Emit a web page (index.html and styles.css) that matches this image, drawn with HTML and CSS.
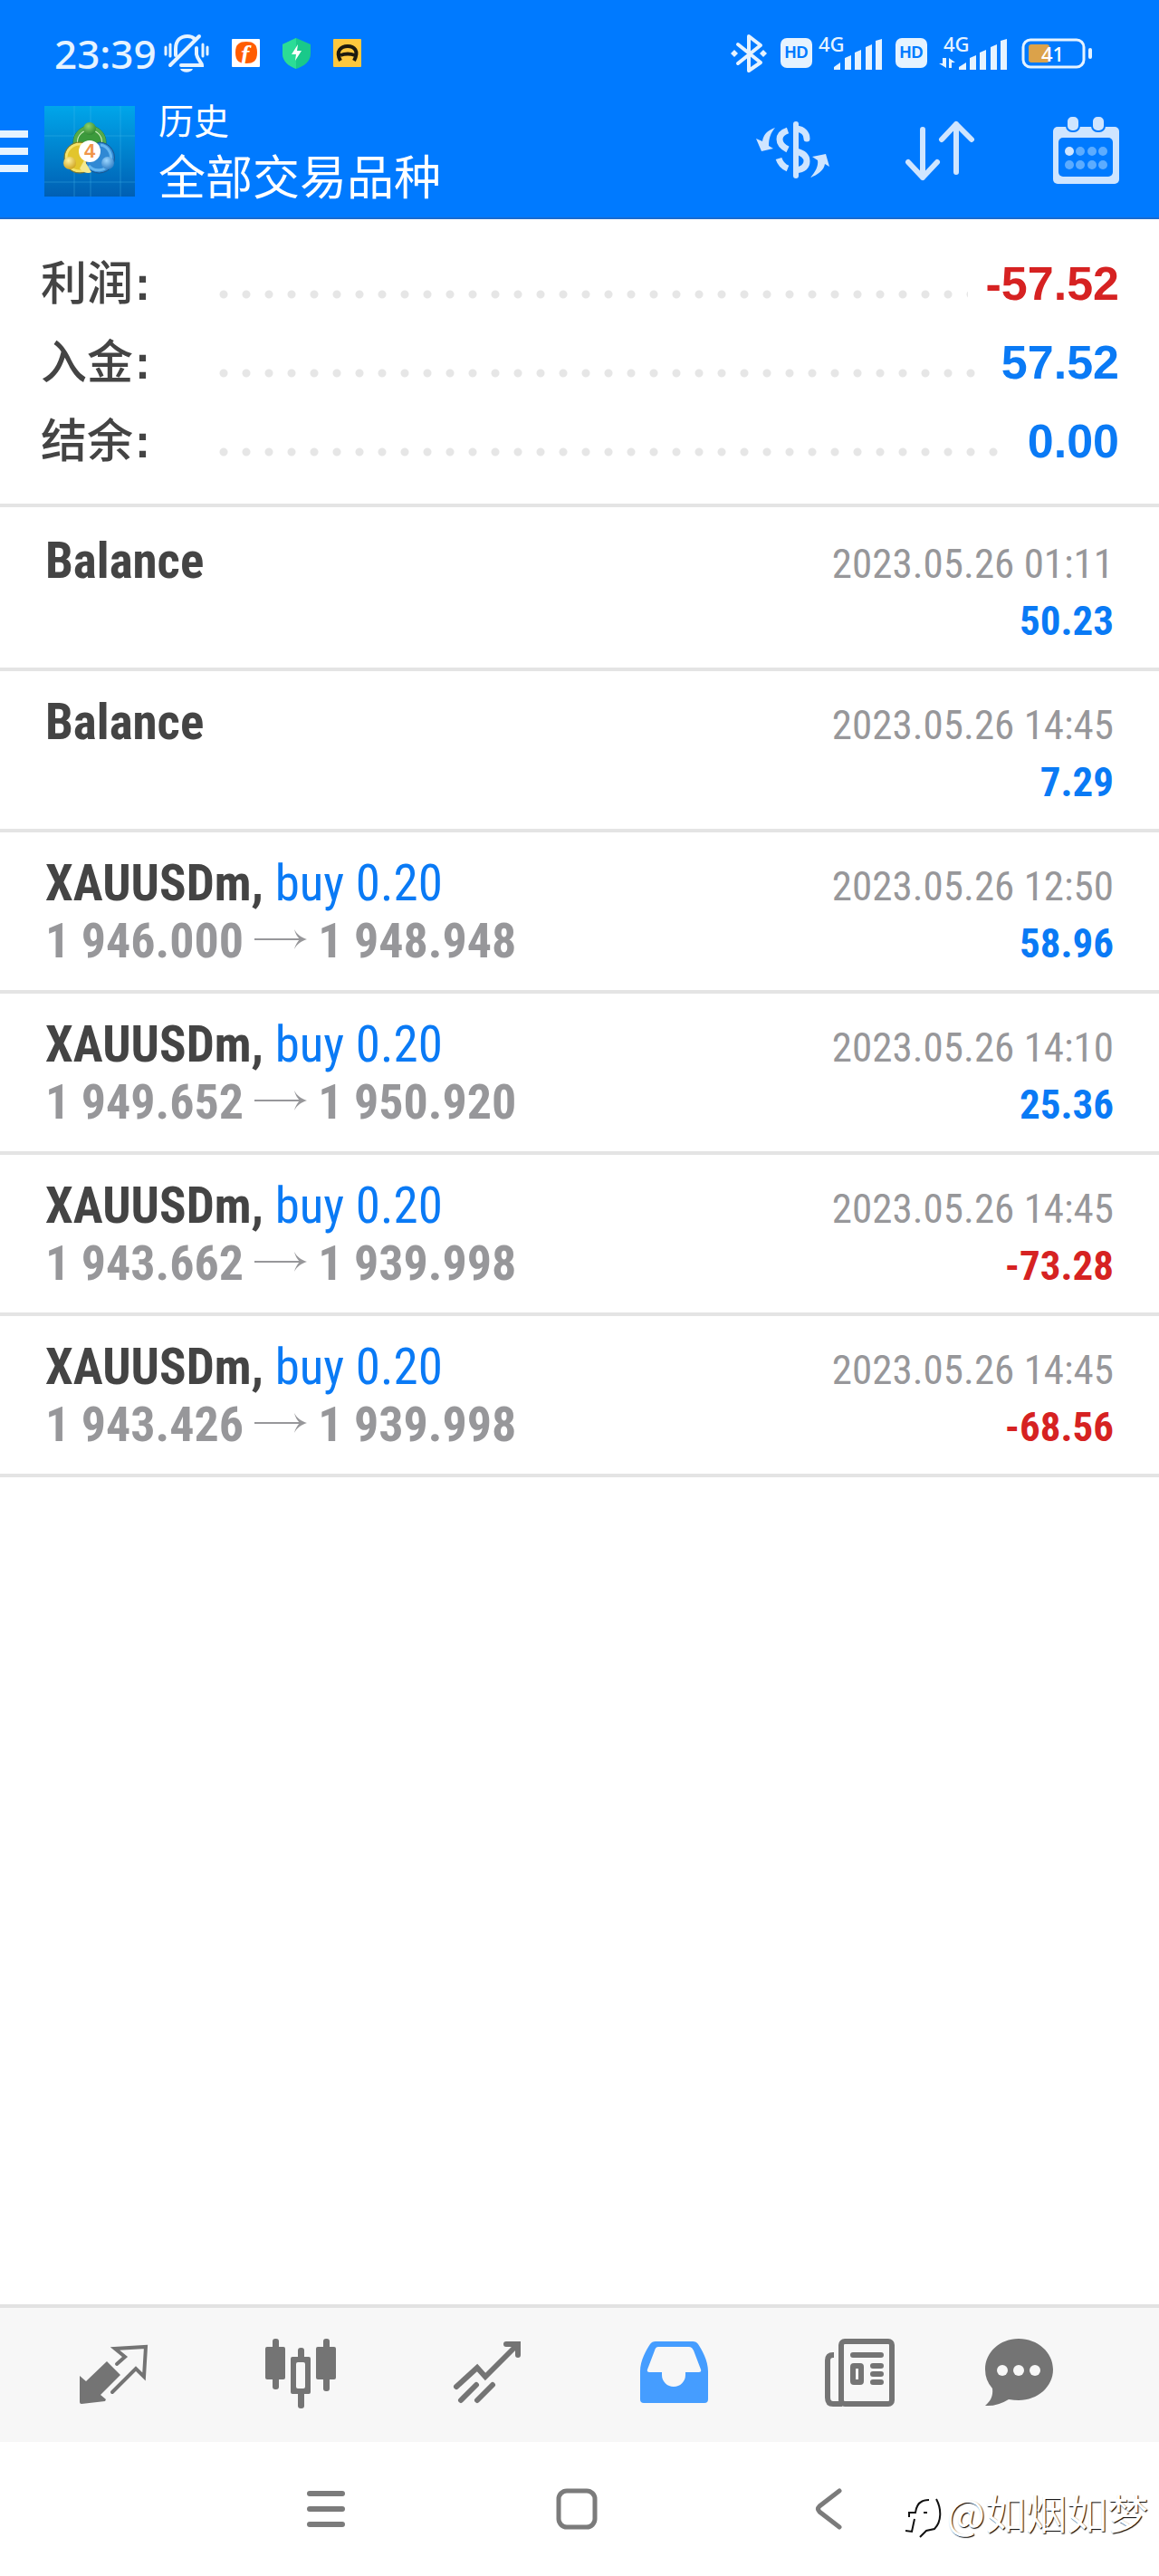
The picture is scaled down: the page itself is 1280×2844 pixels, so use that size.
FILE: index.html
```
<!DOCTYPE html>
<html lang="zh-CN">
<head>
    <meta charset="UTF-8">
    <meta name="viewport" content="width=device-width, initial-scale=1.0">
    <title>历史</title>
    <link rel="stylesheet" href="styles.css">
</head>
<body>
    <header class="header">
        <div class="status-bar">
            <div class="status-left">
                <span class="time">23:39</span>
                <div class="status-icons">
                    <!-- Muted bell -->
                    <svg width="51" height="46" viewBox="1 0 51 46" fill="none" stroke="#e6f3ff" stroke-width="4" stroke-linecap="round">
                        <path d="M15 25V18C15 8 21 4 28 4C31 4 34 5 36 7"/>
                        <path d="M41 4L9 36"/>
                        <path d="M38 17V24C39 30 44 33 44 36H21"/>
                        <path d="M20 40H34C32 45 22 45 20 40Z" fill="#e6f3ff" stroke="none"/>
                        <path d="M4 16V24M9 13V26M45 13V26M50 16V24" stroke-width="3"/>
                    </svg>
                    <svg width="31" height="31" viewBox="0 0 31 31">
                        <rect width="31" height="31" rx="1" fill="#fff"/>
                        <path d="M4 15C4 6 8 3 16 3C24 3 28 6 28 15C28 24 24 27 16 27C8 27 4 24 4 15Z" fill="#ff5c00"/>
                        <text x="10" y="26" class="app-letter">f</text>
                    </svg>
                    <svg width="31" height="34" viewBox="0 0 31 34">
                        <path d="M15 0L31 7V17C31 26 24 31 15 34C7 31 0 26 0 17V7Z" fill="#19c98a"/>
                        <path d="M15 0V34C7 31 0 26 0 17V7Z" fill="#2bdc97"/>
                        <path d="M17 7L10 18H15L14 25L21 14H16Z" fill="#fff"/>
                    </svg>
                    <svg width="31" height="31" viewBox="0 0 31 31">
                        <rect width="31" height="31" rx="1" fill="#ffc83d"/>
                        <path d="M8 24C2 13 9 8 16 8C23 8 29 13 23 24M8 18C13 16 19 16 24 18" fill="none" stroke="#1d1a10" stroke-width="4"/>
                    </svg>
                </div>
            </div>
            <div class="status-right">
                <!-- Bluetooth -->
                <svg width="40" height="44" viewBox="0 0 40 44" fill="none" stroke="#e6f3ff" stroke-width="4" stroke-linecap="round" stroke-linejoin="round">
                    <path d="M8 12L33 32L20 41V3L33 13L8 33"/>
                    <path d="M0 22L4 18L8 22L4 26ZM32 22L36 18L40 22L36 26Z" fill="#e6f3ff" stroke="none"/>
                </svg>
                <div class="sim">
                    <span class="hd">HD</span>
                    <svg width="70" height="52" viewBox="0 -6 70 52" fill="#e6f3ff">
                        <text x="0" y="18" class="net">4G</text>
                        <path d="M17 35L24 30V38H17ZM29 25L36 22V38H29ZM40 19L47 16V38H40ZM52 13L59 10V38H52ZM63 6L70 4V38H63Z"/>
                    </svg>
                </div>
                <div class="sim">
                    <span class="hd">HD</span>
                    <svg width="82" height="52" viewBox="0 -6 82 52" fill="#e6f3ff">
                        <text x="11" y="18" class="net">4G</text>
                        <path d="M14 25V36L6 31H10V25ZM17 36V25L24 30H20V36Z"/>
                        <path d="M28 35L36 30V38H28ZM40 25L47 22V38H40ZM51 19L58 16V38H51ZM63 13L70 10V38H63ZM74 6L81 4V38H74Z"/>
                    </svg>
                </div>
                <svg width="79" height="34" viewBox="0 0 79 34">
                    <rect x="2" y="2" width="67" height="30" rx="8" fill="none" stroke="#e6f3ff" stroke-width="3"/>
                    <rect x="8" y="7" width="23" height="20" rx="3" fill="#dba24a"/>
                    <rect x="74" y="11" width="4" height="12" rx="2" fill="#e6f3ff"/>
                    <text x="22" y="26" class="battery-level">41</text>
                </svg>
            </div>
        </div>

        <div class="app-bar">
            <button class="menu-button" type="button" aria-label="菜单">
                <svg width="31" height="46" viewBox="0 0 31 46" fill="#e6f3ff">
                    <path d="M0 0H31V8H0ZM0 19H31V27H0ZM0 38H31V46H0Z"/>
                </svg>
            </button>
            <svg class="logo" width="100" height="100" viewBox="0 0 100 100">
                <defs>
                    <linearGradient id="sky" x1="0" y1="0" x2="0" y2="1">
                        <stop offset="0" stop-color="#00a6ea"/>
                        <stop offset="1" stop-color="#005fb3"/>
                    </linearGradient>
                    <radialGradient id="green" cx=".4" cy=".3" r=".8"><stop offset="0" stop-color="#8fd06a"/><stop offset="1" stop-color="#23802c"/></radialGradient>
                    <radialGradient id="yellow" cx=".4" cy=".3" r=".8"><stop offset="0" stop-color="#fff3a0"/><stop offset="1" stop-color="#c99a10"/></radialGradient>
                    <radialGradient id="blue" cx=".4" cy=".3" r=".8"><stop offset="0" stop-color="#9bd6ff"/><stop offset="1" stop-color="#2474be"/></radialGradient>
                </defs>
                <rect width="100" height="100" fill="url(#sky)"/>
                <path d="M0 33H100M0 84H100M33 0V100M51 0V100M84 0V100" stroke="#4cc0ee" stroke-opacity=".35"/>
                <circle cx="50" cy="40" r="14" fill="#3c9a3c" stroke="#d4efc4" stroke-width="2"/>
                <circle cx="50" cy="40" r="18" fill="none" stroke="#2c7a35" stroke-width="1"/>
                <circle cx="50" cy="40" r="16" fill="none" stroke="#55ab4a" stroke-width="4"/>
                <circle cx="39" cy="57" r="15" fill="#e2c52c" stroke="#f5e36a" stroke-width="3"/>
                <circle cx="39" cy="57" r="17" fill="none" stroke="#94760f" stroke-width="1"/>
                <path d="M50 45L61 40A17 17 0 1 1 46 66Z" fill="#3089d4" stroke="#17548f" stroke-width="1"/>
                <path d="M62 43A14 14 0 1 1 49 66" fill="none" stroke="#66b7f0" stroke-width="3"/>
                <path d="M44 60L39 69C43 74 49 75 52 73Z" fill="#f3e98f"/>
                <circle cx="50" cy="25" r="7" fill="url(#green)"/>
                <circle cx="28" cy="63" r="7" fill="url(#yellow)"/>
                <circle cx="70" cy="63" r="7" fill="url(#blue)"/>
                <circle cx="50" cy="50" r="12" fill="#fff"/>
                <text x="50" y="57" text-anchor="middle" class="logo-number">4</text>
            </svg>
            <div class="titles">
                <h1 class="title">历史</h1>
                <p class="subtitle">全部交易品种</p>
            </div>
            <div class="actions">
                <button type="button" aria-label="交易品种">
                    <svg width="82" height="80" viewBox="0 0 82 80" fill="none" stroke="#cfe5ff" stroke-width="7">
                        <path d="M45 10V67" stroke-width="6" stroke-linecap="round"/>
                        <path d="M46 15C53 16 57 20 57 26" stroke-linecap="round"/>
                        <path d="M45 40C54 42 57 46 57 51C57 57 53 60 45 61"/>
                        <path d="M36 17C24 21 24 32 36 38M26 48C28 54 31 57 36 59"/>
                        <path d="M22 14C13 17 9 22 8 29L1 26L7 40L20 37L15 34C15 26 17 20 22 14Z" fill="#cfe5ff" stroke="none"/>
                        <path d="M61 69C69 66 76 61 77 54L82 57L78 43L63 46L69 50C70 56 67 62 61 69Z" fill="#cfe5ff" stroke="none"/>
                    </svg>
                </button>
                <button type="button" aria-label="排序">
                    <svg width="78" height="80" viewBox="0 0 78 80" fill="none" stroke="#cfe5ff" stroke-width="6" stroke-linecap="round" stroke-linejoin="round">
                        <path d="M19 16V69M3 52L19 69L35 52M56 63V10M40 27L56 10L73 27"/>
                    </svg>
                </button>
                <button type="button" aria-label="日期">
                    <svg width="74" height="80" viewBox="0 0 74 80">
                        <rect x="1" y="13" width="73" height="63" rx="5" fill="#cfe5ff"/>
                        <rect x="7" y="25" width="60" height="43" rx="5" fill="#007aff"/>
                        <rect x="16" y="1" width="14" height="17" rx="6" fill="#cfe5ff" stroke="#007aff" stroke-width="2"/>
                        <rect x="44" y="1" width="14" height="17" rx="6" fill="#cfe5ff" stroke="#007aff" stroke-width="2"/>
                        <circle cx="19" cy="40" r="5" fill="#cfe5ff"/>
                        <g fill="#5cacff">
                            <circle cx="31" cy="40" r="5"/>
                            <circle cx="44" cy="40" r="5"/>
                            <circle cx="56" cy="40" r="5"/>
                            <circle cx="19" cy="55" r="5"/>
                            <circle cx="31" cy="55" r="5"/>
                            <circle cx="44" cy="55" r="5"/>
                            <circle cx="56" cy="55" r="5"/>
                        </g>
                    </svg>
                </button>
            </div>
        </div>
    </header>

    <main class="content">
        <dl class="summary">
            <div class="summary-row">
                <dt>利润<span class="colon">:</span></dt>
                <dd class="loss">-57.52</dd>
            </div>
            <div class="summary-row">
                <dt>入金<span class="colon">:</span></dt>
                <dd class="profit">57.52</dd>
            </div>
            <div class="summary-row">
                <dt>结余<span class="colon">:</span></dt>
                <dd class="profit">0.00</dd>
            </div>
        </dl>

        <ul class="deals">
            <li class="deal">
                <span class="name">Balance</span>
                <time class="date">2023.05.26 01:11</time>
                <span class="prices">&nbsp;</span>
                <span class="amount profit">50.23</span>
            </li>
            <li class="deal">
                <span class="name">Balance</span>
                <time class="date">2023.05.26 14:45</time>
                <span class="prices">&nbsp;</span>
                <span class="amount profit">7.29</span>
            </li>
            <li class="deal">
                <span class="name">XAUUSDm, <span class="side">buy 0.20</span></span>
                <time class="date">2023.05.26 12:50</time>
                <span class="prices">1 946.000<svg class="arrow" width="58" height="24" viewBox="0 0 58 24"><path d="M0 11H50V13H0ZM44 1C47 7 52 10 58 12C52 14 47 17 44 23C45 19 47 15 50 12C47 9 45 5 44 1Z"/></svg>1 948.948</span>
                <span class="amount profit">58.96</span>
            </li>
            <li class="deal">
                <span class="name">XAUUSDm, <span class="side">buy 0.20</span></span>
                <time class="date">2023.05.26 14:10</time>
                <span class="prices">1 949.652<svg class="arrow" width="58" height="24" viewBox="0 0 58 24"><path d="M0 11H50V13H0ZM44 1C47 7 52 10 58 12C52 14 47 17 44 23C45 19 47 15 50 12C47 9 45 5 44 1Z"/></svg>1 950.920</span>
                <span class="amount profit">25.36</span>
            </li>
            <li class="deal">
                <span class="name">XAUUSDm, <span class="side">buy 0.20</span></span>
                <time class="date">2023.05.26 14:45</time>
                <span class="prices">1 943.662<svg class="arrow" width="58" height="24" viewBox="0 0 58 24"><path d="M0 11H50V13H0ZM44 1C47 7 52 10 58 12C52 14 47 17 44 23C45 19 47 15 50 12C47 9 45 5 44 1Z"/></svg>1 939.998</span>
                <span class="amount loss">-73.28</span>
            </li>
            <li class="deal">
                <span class="name">XAUUSDm, <span class="side">buy 0.20</span></span>
                <time class="date">2023.05.26 14:45</time>
                <span class="prices">1 943.426<svg class="arrow" width="58" height="24" viewBox="0 0 58 24"><path d="M0 11H50V13H0ZM44 1C47 7 52 10 58 12C52 14 47 17 44 23C45 19 47 15 50 12C47 9 45 5 44 1Z"/></svg>1 939.998</span>
                <span class="amount loss">-68.56</span>
            </li>
        </ul>
    </main>

    <nav class="tabs">
        <a href="#" aria-label="行情">
            <svg width="80" height="80" viewBox="0 0 80 80">
                <path d="M2 41L9 47L32 25L47 40L25 62L31 67L30 69L4 72Q2 72 2 70Z" fill="#747474"/>
                <path d="M43 28L52 20L41 11L75 9L73 42L64 33L38 59" fill="none" stroke="#747474" stroke-width="4" stroke-linecap="round"/>
            </svg>
        </a>
        <a href="#" aria-label="图表">
            <svg width="80" height="80" viewBox="0 0 80 80" fill="#747474">
                <rect x="1" y="9" width="22" height="36" rx="2"/>
                <rect x="9" y="0" width="7" height="56" rx="3"/>
                <rect x="57" y="9" width="22" height="36" rx="2"/>
                <rect x="65" y="0" width="7" height="58" rx="3"/>
                <rect x="37" y="10" width="7" height="67" rx="3"/>
                <rect x="29" y="20" width="22" height="41" rx="2"/>
                <rect x="35" y="26" width="10" height="29" rx="2" fill="#f7f7f7"/>
            </svg>
        </a>
        <a href="#" aria-label="交易">
            <svg width="80" height="80" viewBox="0 0 80 80" fill="none" stroke="#747474" stroke-width="6" stroke-linecap="round">
                <path d="M6 53L29 32L38 42L73 7M61 6H74V18"/>
                <path d="M11 68L28 51M29 68L46 51"/>
            </svg>
        </a>
        <a href="#" class="active" aria-label="历史">
            <svg width="80" height="80" viewBox="0 0 80 80" fill="#459dff" fill-rule="evenodd">
                <path d="M3 36C3 24 10 12 14 6Q16 3 20 3H61Q65 3 67 6C71 12 78 24 78 36V67Q78 71 74 71H7Q3 71 3 67ZM13 37H27V40A13 13 0 0 0 53 40V37H68Q71 37 70 34L62 13Q60 9 57 9H23Q20 9 19 13L11 34Q10 37 13 37Z"/>
            </svg>
        </a>
        <a href="#" aria-label="新闻">
            <svg width="80" height="80" viewBox="0 0 80 80" fill="none" stroke="#747474" stroke-width="6">
                <rect x="19" y="3" width="56" height="69" rx="4"/>
                <path d="M11 18H10Q4 18 4 24V65Q4 72 10 72H20"/>
                <path d="M32 18H63M54 30H63M54 39H63M54 48H63" stroke-linecap="round"/>
                <rect x="32" y="30" width="9" height="18" rx="1"/>
            </svg>
        </a>
        <a href="#" aria-label="消息">
            <svg width="80" height="80" viewBox="0 0 80 80">
                <path d="M39 0C60 0 77 15 77 34S60 68 39 68Q34 68 28 67Q15 75 2 74C8 69 11 63 10 55Q2 46 2 34C2 15 18 0 39 0Z" fill="#747474"/>
                <g fill="#f7f7f7">
                    <circle cx="21" cy="35" r="6"/>
                    <circle cx="39" cy="35" r="6"/>
                    <circle cx="57" cy="35" r="6"/>
                </g>
            </svg>
        </a>
    </nav>

    <footer class="system-nav">
        <button type="button" aria-label="最近任务">
            <svg width="46" height="46" viewBox="0 0 46 46" fill="none" stroke="#7b7b7b" stroke-width="6" stroke-linecap="round">
                <path d="M5 6H41M5 23H41M5 40H41"/>
            </svg>
        </button>
        <button type="button" aria-label="主屏幕">
            <svg width="46" height="46" viewBox="0 0 46 46" fill="none" stroke="#7b7b7b" stroke-width="5">
                <rect x="3" y="3" width="40" height="40" rx="9"/>
            </svg>
        </button>
        <button type="button" aria-label="返回">
            <svg width="46" height="46" viewBox="0 0 46 46" fill="none" stroke="#7b7b7b" stroke-width="5" stroke-linecap="round">
                <path d="M36 3L14 20Q11 23 14 26L36 43"/>
            </svg>
        </button>
        <div class="watermark">
            <svg width="42" height="48" viewBox="0 0 42 48" fill="none" stroke="#111" stroke-width="2">
                <path d="M0 38L7 39L10 25M4 23V18H11C12 9 16 4 26 4M34 3C40 14 40 28 32 36L23 38L16 45M20 18H24"/>
            </svg>
            <span>@如烟如梦</span>
        </div>
    </footer>
</body>
</html>
```
FILE: styles.css
```
* {
    box-sizing: border-box;
}

body {
    margin: 0;
    min-height: 100vh;
    display: flex;
    flex-direction: column;
    background-color: #fff;
    color: #444;
    font-family: "Roboto Condensed", Roboto, "Noto Sans CJK SC", sans-serif;
}

button {
    display: flex;
    padding: 0;
    border: none;
    background: none;
    cursor: pointer;
}

svg {
    display: block;
    flex: none;
}

/* Header */
.header {
    background-color: #007aff;
    border-bottom: 2px solid #1a6bd0;
    color: #fff;
}

.status-bar {
    display: flex;
    justify-content: space-between;
    align-items: center;
    height: 117px;
    padding: 0 73px 0 60px;
}

.status-left, .status-icons, .status-right, .sim {
    display: flex;
    align-items: center;
}

.status-left {
    gap: 7px;
}

.status-icons {
    gap: 25px;
}

.status-right {
    gap: 15px;
}

.sim {
    gap: 7px;
}

.time {
    font-family: "Noto Sans", sans-serif;
    font-size: 44px;
    font-weight: 500;
    line-height: 60px;
    color: #e6f3ff;
}

.hd {
    width: 35px;
    height: 33px;
    border-radius: 7px;
    background-color: #e6f3ff;
    color: #007aff;
    font-family: "Liberation Sans", sans-serif;
    font-size: 18px;
    font-weight: bold;
    line-height: 33px;
    text-align: center;
}

.net {
    font-family: "Noto Sans", sans-serif;
    font-size: 22px;
    font-weight: 500;
}

.battery-level {
    font-family: "Noto Sans", sans-serif;
    font-size: 22px;
    font-weight: 500;
    fill: #fff;
}

.app-letter {
    font-family: "Liberation Serif", serif;
    font-size: 28px;
    font-weight: bold;
    font-style: italic;
    fill: #fff;
}

.app-bar {
    display: flex;
    align-items: center;
    height: 123px;
    padding: 0 44px 23px 0;
}

.logo {
    margin-left: 18px;
}

.logo-number {
    font-family: "Liberation Sans", sans-serif;
    font-size: 22px;
    font-weight: bold;
    fill: #f0964a;
}

.titles {
    flex: 1;
    margin-left: 26px;
    font-family: "Noto Sans CJK SC", sans-serif;
}

.title {
    margin: 0;
    font-size: 39px;
    font-weight: normal;
    line-height: 52px;
}

.subtitle {
    margin: 0;
    font-size: 52px;
    line-height: 72px;
}

.actions {
    display: flex;
    gap: 84px;
}

/* Account summary */
.content {
    flex: 1;
}

.summary {
    margin: 0;
    padding: 28px 44px 25px 45px;
    border-bottom: 4px solid #e4e4e4;
    font-family: "Liberation Sans", "Noto Sans CJK SC", sans-serif;
    font-size: 51px;
    line-height: 87px;
}

.summary-row {
    display: flex;
    height: 87px;
}

/* Dotted leader between the label and the value */
.summary-row::before {
    content: "";
    order: 1;
    flex: 1;
    margin-right: 20px;
    background: radial-gradient(circle at 12px 55px, #e6e6e6 4px, transparent 5px) repeat-x;
    background-size: 25px 87px;
}

.summary dt {
    width: 190px;
    font-weight: 500;
}

.summary dd {
    order: 2;
    margin: 0;
    font-size: 52px;
    font-weight: bold;
}

.colon {
    margin-left: 2px;
    font-weight: bold;
}

.profit {
    color: #0a7af5;
}

.loss {
    color: #d62222;
}

/* Deals */
.deals {
    margin: 0;
    padding: 3px 0 0;
    list-style: none;
}

.deal {
    display: grid;
    grid-template-columns: 1fr auto;
    grid-template-rows: 63px 63px;
    align-items: baseline;
    padding: 25px 50px 23px;
    border-bottom: 4px solid #e4e4e4;
    line-height: 63px;
}

.name {
    font-size: 55px;
    font-weight: bold;
}

.side {
    font-weight: normal;
    color: #0a7af5;
}

.prices {
    font-size: 54px;
    font-weight: bold;
    color: #97979a;
}

.arrow {
    display: inline-block;
    margin: 0 12px;
    vertical-align: 8px;
    fill: #97979a;
}

.date {
    font-size: 45px;
    color: #97979a;
}

.amount {
    font-size: 45px;
    font-weight: bold;
    text-align: right;
}

/* Bottom tabs */
.tabs {
    display: grid;
    grid-template-columns: repeat(5, 1fr) 146px;
    align-items: center;
    justify-items: center;
    height: 152px;
    padding: 0 81px 0 23px;
    border-top: 4px solid #e2e2e2;
    background-color: #f7f7f7;
}

/* Android navigation */
.system-nav {
    position: relative;
    display: grid;
    grid-template-columns: repeat(3, 1fr);
    align-items: center;
    justify-items: center;
    height: 148px;
    padding: 0 228px 0 222px;
}

.watermark {
    position: absolute;
    right: 12px;
    bottom: 40px;
    display: flex;
    align-items: flex-end;
    gap: 3px;
    color: #fff;
    font-family: "Noto Sans CJK SC", sans-serif;
    font-size: 45px;
    line-height: 60px;
    text-shadow: 1px 1px 1px #000;
}
```
